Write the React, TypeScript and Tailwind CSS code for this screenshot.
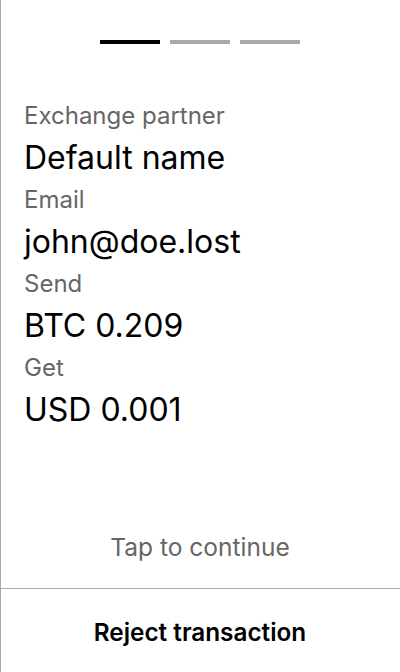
const rows = [
  { label: 'Exchange partner', value: 'Default name' },
  { label: 'Email', value: 'john@doe.lost' },
  { label: 'Send', value: 'BTC 0.209' },
  { label: 'Get', value: 'USD 0.001' },
];

function Steps() {
  return (
    <div className="flex justify-center gap-[10px]">
      <div className="h-1 w-[60px] bg-black" />
      <div className="h-1 w-[60px] bg-[#aaaaaa]" />
      <div className="h-1 w-[60px] bg-[#aaaaaa]" />
    </div>
  );
}

export default function App() {
  return (
    <div
      className="flex h-[672px] w-[400px] flex-col bg-white text-black shadow-[inset_1px_0_0_#aaaaaa]"
      style={{ fontFamily: 'Inter, "Noto Sans", sans-serif' }}
    >
      <div className="flex flex-1 flex-col pt-10">
        <Steps />
        <div className="mt-[54px] flex flex-col px-6">
          {rows.map((row) => (
            <div key={row.label}>
              <div className="text-[24px] leading-[36px] text-[#666666]">{row.label}</div>
              <div className="text-[32px] leading-[48px]">{row.value}</div>
            </div>
          ))}
        </div>
        <div className="mt-auto pb-[25px] text-center text-[24.5px] leading-[32px] text-[#666666]">
          Tap to continue
        </div>
      </div>
      <button className="h-[84px] w-full border-t border-[#aaaaaa] pt-[3px] text-[24.3px] font-semibold">
        Reject transaction
      </button>
    </div>
  );
}
